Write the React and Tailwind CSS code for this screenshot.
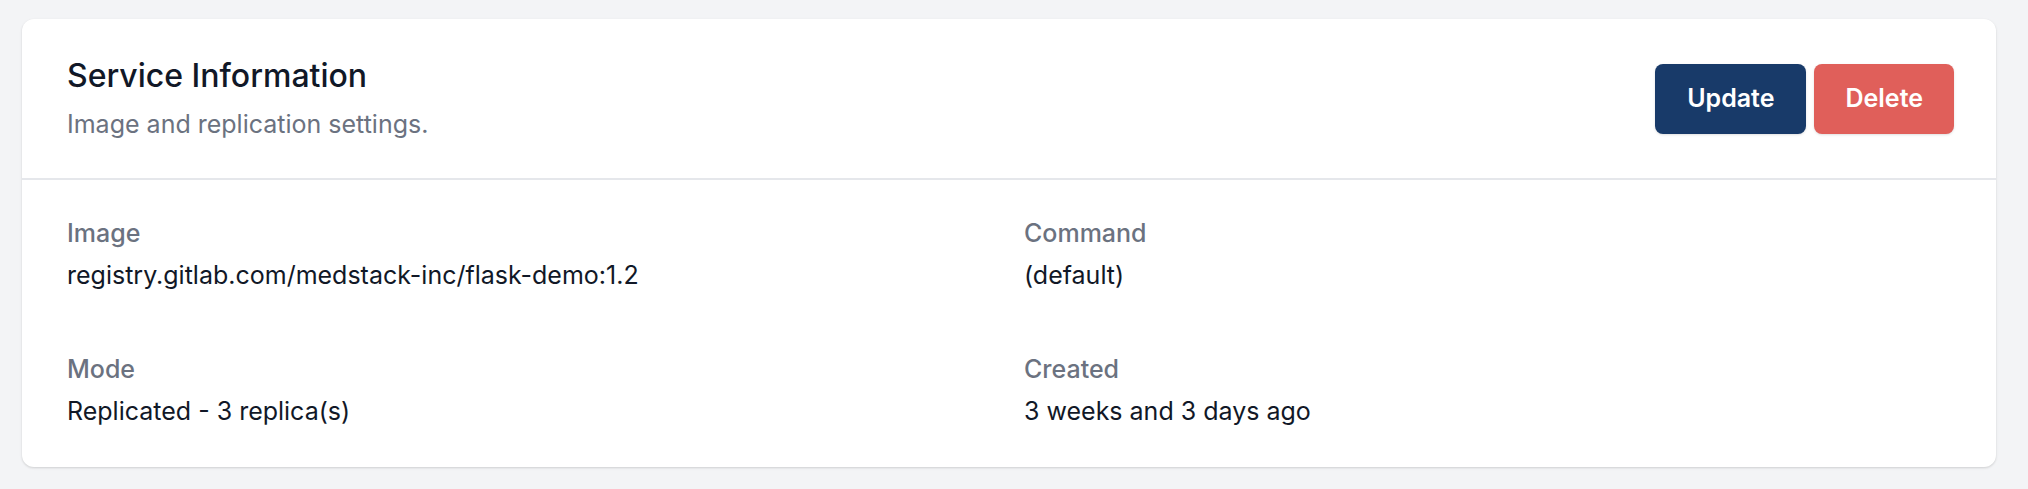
export default function App() {
  const items = [
    { label: "Image", value: "registry.gitlab.com/medstack-inc/flask-demo:1.2" },
    { label: "Command", value: "(default)" },
    { label: "Mode", value: "Replicated - 3 replica(s)" },
    { label: "Created", value: "3 weeks and 3 days ago" },
  ];
  return (
    <div className="min-h-screen bg-[#f3f4f6] pl-[22px] pr-[32px] pt-[19px] font-['Inter',sans-serif]">
      <div className="rounded-[12px] bg-white shadow-[0_1px_3px_rgba(0,0,0,0.1),0_1px_2px_rgba(0,0,0,0.06)]">
        <div className="flex items-center justify-between border-b-2 border-[#e5e7eb] pl-[45px] pr-[42px] pt-[37px] pb-[36px]">
          <div className="flex flex-col gap-[10px]">
            <h2 className="text-[32px] leading-[40px] font-medium text-[#111827]">Service Information</h2>
            <p className="text-[25px] leading-[36px] text-[#6b7280]">Image and replication settings.</p>
          </div>
          <div className="flex gap-[8px]">
            <button className="h-[70px] rounded-[8px] bg-[#183a69] px-[32px] text-[25px] font-semibold text-white shadow-sm">Update</button>
            <button className="h-[70px] rounded-[8px] bg-[#e05f5a] px-[31px] text-[25px] font-semibold text-white shadow-sm">Delete</button>
          </div>
        </div>
        <div className="grid grid-cols-2 gap-x-[30px] gap-y-[58px] px-[45px] pt-[35px] pb-[38px]">
          {items.map((it) => (
            <div key={it.label} className="flex flex-col gap-[6px]">
              <div className="text-[25px] leading-[36px] font-medium text-[#6b7280]">{it.label}</div>
              <div className="text-[25px] leading-[36px] text-[#111827]">{it.value}</div>
            </div>
          ))}
        </div>
      </div>
    </div>
  );
}
